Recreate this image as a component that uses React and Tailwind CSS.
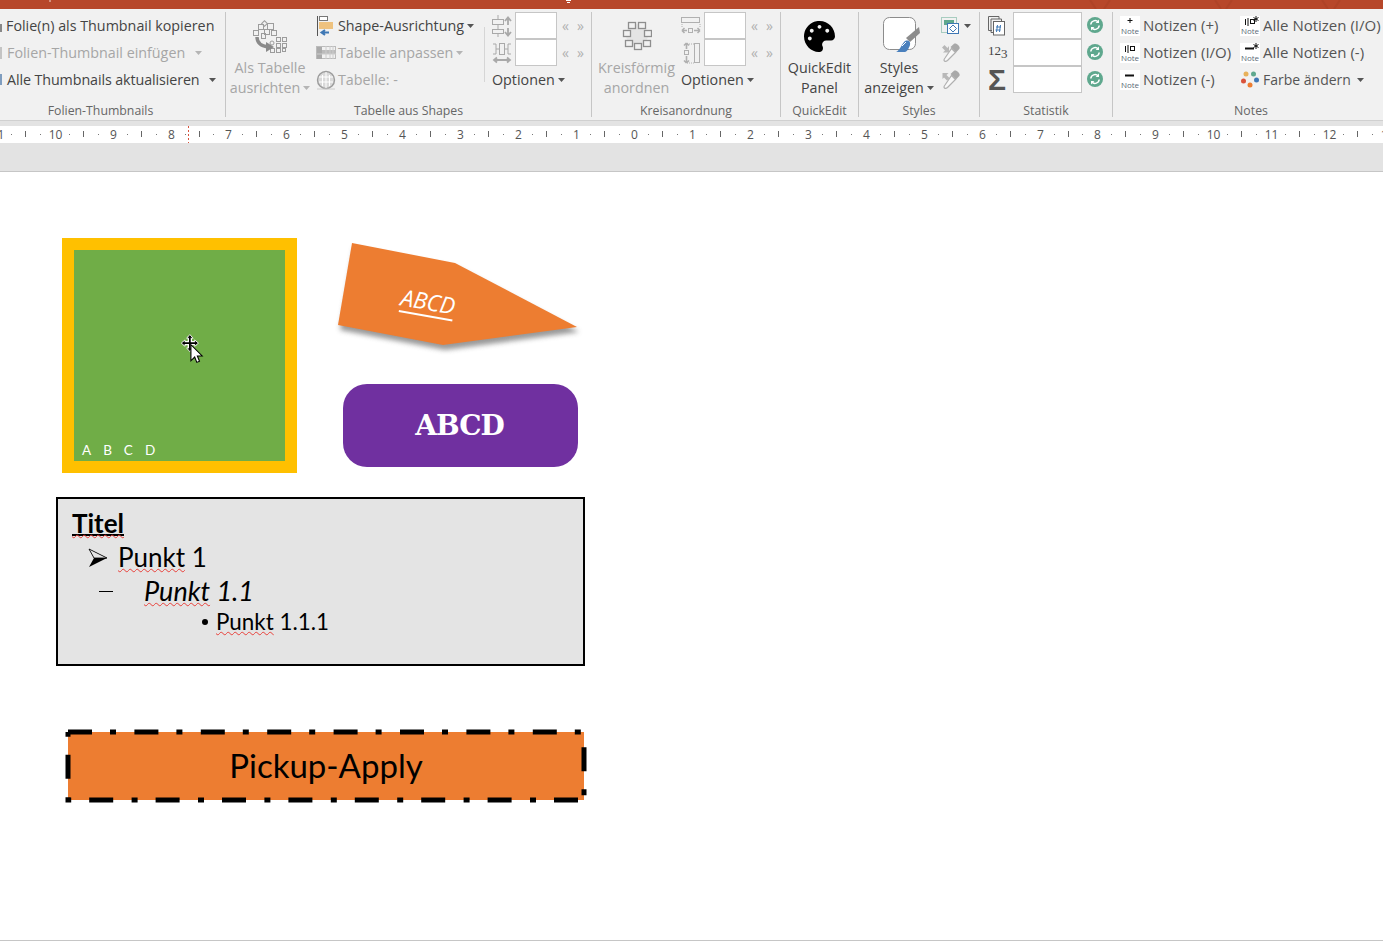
import { FaPalette } from 'react-icons/fa'

const DARK = 'text-[#444444]'
const MUTED = 'text-[#a6a6a6]'

function Caret({ muted, className = '' }) {
  return (
    <svg width="7" height="4" viewBox="0 0 7 4" className={`shrink-0 ${className}`}>
      <path d="M0 0h7L3.5 4z" fill={muted ? '#b5b5b5' : '#555'} />
    </svg>
  )
}

function Row({ children, className = '' }) {
  return <div className={`flex h-[27px] items-center whitespace-nowrap ${className}`}>{children}</div>
}

function Group({ width, label, labelClass = 'text-center', last, children }) {
  return (
    <div className={`${width} h-[105px] shrink-0 flex flex-col ${last ? '' : 'border-r border-[#c6c6c6]'}`}>
      <div className="h-[88px] flex shrink-0">{children}</div>
      <div className={`mt-[3px] h-[16px] leading-[16px] text-[12.3px] text-[#666666] ${labelClass}`}>{label}</div>
    </div>
  )
}

function BigButton({ width, icon, lines, muted, caret }) {
  return (
    <div className={`${width} shrink-0 flex flex-col items-center ${muted ? MUTED : DARK}`}>
      <div className="h-[44px] shrink-0 flex items-center justify-center mt-[2px]">{icon}</div>
      <div className="h-[20px] shrink-0 leading-[20px]">{lines[0]}</div>
      <div className="h-[20px] shrink-0 leading-[20px] flex items-center gap-[3px]">
        {lines[1]}
        {caret && <Caret muted={muted} />}
      </div>
    </div>
  )
}

function Stepper({ icon }) {
  return (
    <Row>
      <div className="w-[20px] h-[27px] flex items-center justify-center">{icon}</div>
      <div className="ml-[3px] w-[42px] h-[27px] bg-white border border-[#c6c6c6]" />
      <div className="ml-[5px] w-[22px] pt-[1px] flex justify-between text-[14px] leading-none text-[#b0b0b0]">
        <span>«</span>
        <span>»</span>
      </div>
    </Row>
  )
}

/* ---------- ribbon icons ---------- */

function AlignAsTableIcon() {
  return (
    <svg width="36" height="36" viewBox="0 0 36 36" fill="none" stroke="#9c9c9c" strokeWidth="1">
      <rect x="10.500" y="3.500" width="4" height="4" transform="rotate(45 12.500 5.500)" />
      <rect x="6.500" y="6.500" width="5" height="5" />
      <rect x="15.500" y="5.500" width="6" height="6" />
      <rect x="12.500" y="11.500" width="5" height="5" />
      <rect x="19.500" y="12.500" width="5" height="5" />
      <rect x="1.500" y="12.500" width="5" height="5" />
      <rect x="9.500" y="15.500" width="4" height="5" />
      <rect x="24.500" y="19.500" width="4" height="4" />
      <rect x="30.500" y="19.500" width="4" height="4" />
      <rect x="24.500" y="25.500" width="4" height="4" />
      <rect x="30.500" y="25.500" width="4" height="4" />
      <rect x="18.500" y="30.500" width="4" height="4" />
      <rect x="24.500" y="30.500" width="4" height="4" />
      <rect x="30.500" y="30.500" width="3" height="3" />
      <circle cx="20" cy="25" r="2" />
      <path d="M5 19c0 6 4 9 11 10" stroke="#8a8a8a" strokeWidth="3.400" />
      <path d="M14 24l8 5-8 5z" fill="#8a8a8a" stroke="none" />
    </svg>
  )
}

function ShapeAlignIcon() {
  return (
    <svg width="20" height="20" viewBox="0 0 20 20">
      <path d="M1.500 0v20" stroke="#555" />
      <rect x="3.500" y="0.500" width="8" height="4" fill="#fff" stroke="#777" />
      <rect x="3" y="6" width="14" height="7" fill="#eec27f" />
      <path d="M13 16.500H6M9 14l-3.500 2.500L9 19" stroke="#3f78b5" strokeWidth="2" fill="none" />
    </svg>
  )
}

function TableFitIcon() {
  return (
    <svg width="20" height="16" viewBox="0 0 20 16">
      <rect x="0.500" y="1.500" width="19" height="12" fill="none" stroke="#bbb" />
      <rect x="1" y="2" width="5" height="12" fill="#aaa" />
      <path d="M6 5h14v4H6z" fill="#bbb" />
      <path d="M10 1v13M14 1v13M17 1v13M1 9h19" stroke="#ccc" />
    </svg>
  )
}

function TableInfoIcon() {
  return (
    <svg width="20" height="20" viewBox="0 0 20 20" fill="none">
      <circle cx="10" cy="10" r="8.500" fill="#d9d9d9" stroke="#9c9c9c" strokeWidth="1.400" />
      <path d="M10 2v16M6.500 5v11M13.500 5v11M3 7h14M3 12h14" stroke="#fff" />
      <path d="M1 19h18" stroke="#ccc" />
    </svg>
  )
}

function StackVerticalIcon() {
  return (
    <svg width="20" height="22" viewBox="0 0 20 22" fill="none" stroke="#a9a9a9">
      <path d="M6 0v4M6 10v4M6 19v3" />
      <rect x="0.500" y="4.500" width="11" height="5" fill="#f1f1f1" />
      <rect x="0.500" y="14.500" width="11" height="4" fill="#f1f1f1" />
      <path d="M16 3v7M13 6l3-3.500L19 6M16 13v7M13 17l3 3.500 3-3.500" strokeWidth="1.800" />
    </svg>
  )
}

function StackHorizontalIcon() {
  return (
    <svg width="20" height="22" viewBox="0 0 20 22" fill="none" stroke="#a9a9a9">
      <path d="M1 2h3v10H1M4 7h3M13 7h3M16 2h3M16 12h3M16 2v10" />
      <rect x="7.500" y="1.500" width="5" height="11" fill="#f1f1f1" />
      <path d="M2 18h16M5 15.500L2 18l3 2.500M15 15.500l3 2.500-3 2.500" strokeWidth="1.800" />
    </svg>
  )
}

function CircleIcon() {
  return (
    <svg width="30" height="30" viewBox="0 0 30 30" fill="none" stroke="#8e8e8e" strokeWidth="1.300">
      <circle cx="15" cy="14" r="11" fill="#e4e4e4" stroke="none" />
      <rect x="6.500" y="1.500" width="7" height="6" fill="#f1f1f1" />
      <rect x="16.500" y="1.500" width="7" height="6" fill="#f1f1f1" />
      <rect x="1.500" y="9.500" width="7" height="6" fill="#f1f1f1" />
      <rect x="22.500" y="9.500" width="7" height="6" fill="#f1f1f1" />
      <rect x="3.500" y="19.500" width="7" height="6" fill="#f1f1f1" />
      <rect x="12.500" y="22.500" width="7" height="6" fill="#f1f1f1" />
      <rect x="21.500" y="19.500" width="7" height="6" fill="#f1f1f1" />
    </svg>
  )
}

function SpaceHorizontalIcon() {
  return (
    <svg width="20" height="22" viewBox="0 0 20 22" fill="none" stroke="#b0b0b0">
      <rect x="0.500" y="2.500" width="18" height="5" />
      <path d="M1 9v3M19 9v3" strokeDasharray="1 1" />
      <rect x="7.500" y="13.500" width="4" height="4" />
      <path d="M1 15.500h5M1 15.500l2.500-2.500M1 15.500l2.500 2.500M13 15.500h6M19 15.500l-2.500-2.500M19 15.500l-2.500 2.500" strokeWidth="1.600" />
    </svg>
  )
}

function SpaceVerticalIcon() {
  return (
    <svg width="20" height="24" viewBox="0 0 20 24" fill="none" stroke="#b0b0b0">
      <rect x="13.500" y="2.500" width="5" height="19" />
      <path d="M6 3h7M6 22h7" strokeDasharray="1 1" />
      <rect x="3.500" y="9.500" width="4" height="4" />
      <path d="M5.500 2v6M5.500 2L3 4.500M5.500 2L8 4.500M5.500 15v7M5.500 22L3 19.500M5.500 22L8 19.500" strokeWidth="1.600" />
    </svg>
  )
}

function StylesIcon() {
  return (
    <svg width="38" height="38" viewBox="0 0 38 38" className="ml-[3px]">
      <rect x="1.500" y="0.500" width="32" height="32" rx="6" fill="#fff" stroke="#8c8c8c" />
      <path d="M37 10l1 6-10 9-4-4z" fill="#8c8c8c" />
      <path d="M14 35c3-1 5-6 8-10 3-3 7-1 6 3-1 3-3 7-5 7z" fill="#4a80bd" />
      <path d="M20 29l4-4" stroke="#fff" />
    </svg>
  )
}

function PickShapeIcon() {
  return (
    <svg width="20" height="18" viewBox="0 0 20 18" fill="none">
      <rect x="0.500" y="0.500" width="15" height="15" stroke="#5fa88e" strokeDasharray="1 1" />
      <rect x="3" y="3" width="10" height="5" fill="#5fa88e" />
      <rect x="6.500" y="6.500" width="11" height="10" fill="#fff" stroke="#3f78b5" />
      <path d="M12 8l3.500 3.500L12 15l-3.500-3.500z" stroke="#3f78b5" />
    </svg>
  )
}

function DropperIcon({ up }) {
  return (
    <svg width="20" height="20" viewBox="0 0 20 20" fill="none">
      <path d="M13 .8c2.400-1.500 7 3 5.300 5.300l-3.300 3.400-5.500-5.500z" fill="#a9a9a9" />
      <path d="M10.500 5.500l4 4-8 8c-1 .8-2 1.300-3 .5s-.3-2 .5-3z" stroke="#b0b0b0" fill="#f8f8f8" strokeWidth="1.200" />
      {up ? (
        <path d="M1.500 9V3h6l-2 2 3 3-2.500 2.500-3-3z" fill="#b8b8b8" />
      ) : (
        <path d="M8 9.500H2l2-2-3-3L3.500 2l3 3 1.500-2z" fill="#b8b8b8" />
      )}
    </svg>
  )
}

function PagesIcon() {
  return (
    <svg width="18" height="20" viewBox="0 0 18 20" fill="none" stroke="#666">
      <path d="M4 14.500H0.500V0.500H11V3" />
      <path d="M6.500 16.500H3V3H13.500V5" />
      <rect x="5.500" y="5.500" width="11" height="13.500" fill="#fff" />
      <path d="M9.500 9l-1 7M12.500 9l-1 7M8 11h5M7.500 14h5" stroke="#3f78b5" />
    </svg>
  )
}

function RefreshIcon() {
  return (
    <svg width="16" height="16" viewBox="0 0 16 16" fill="none" className="shrink-0">
      <circle cx="8" cy="8" r="8" fill="#5fa88e" />
      <path d="M3.800 7.500A4.300 4.300 0 0 1 11.200 5" stroke="#fff" strokeWidth="1.500" />
      <path d="M12.200 8.500A4.300 4.300 0 0 1 4.800 11" stroke="#fff" strokeWidth="1.500" />
      <path d="M12 2.600v3.400H8.600zM4 13.400V10h3.400z" fill="#fff" />
    </svg>
  )
}

function NoteIcon({ children }) {
  return (
    <div className="w-[20px] h-[20px] shrink-0 bg-white flex flex-col items-center">
      <svg width="20" height="11" viewBox="0 0 20 11" className="shrink-0" stroke="#111" fill="none">
        {children}
      </svg>
      <span className="text-[8px] leading-[8px] text-[#5b6b78]">Note</span>
    </div>
  )
}

const notePlus = <path d="M10 2v5M7.500 4.500h5" />
const noteToggle = (
  <>
    <path d="M5.500 3v6M8 2v8" />
    <rect x="10.500" y="3.500" width="4" height="4" />
  </>
)
const noteMinus = <path d="M5 5.500h9" strokeWidth="2" />
const noteAst = <path d="M16 0v6M13.500 1.500l5 3M18.500 1.500l-5 3" />

function ColorDots() {
  return (
    <svg width="18" height="18" viewBox="0 0 18 18" className="shrink-0">
      <circle cx="5" cy="3" r="2.500" fill="#e8b15a" />
      <circle cx="12.500" cy="3" r="2.500" fill="#5fa88e" />
      <circle cx="2.500" cy="10" r="2.500" fill="#d9533c" />
      <circle cx="15.500" cy="9" r="2.500" fill="#3f78b5" />
      <circle cx="9" cy="14" r="2.500" fill="#ed7d31" />
    </svg>
  )
}

function Ruler() {
  const step = 57.93
  const marks = []
  for (let i = -11; i <= 13; i++) marks.push(i)
  return (
    <svg width="1383" height="17" className="block bg-white text-[12px] font-['Open_Sans',sans-serif]">
      {marks.map((i) => {
        const x = Math.round(634 + i * step)
        return (
          <g key={i}>
            <text x={x + 0.5} y="13" textAnchor="middle" fill="#555">
              {Math.abs(i)}
            </text>
            <rect x={x - 15} y="8" width="1" height="1" fill="#777" />
            <rect x={x + 14} y="8" width="1" height="1" fill="#777" />
            <rect x={x + 28} y="5" width="1" height="6" fill="#666" />
          </g>
        )
      })}
      <path d="M188.500 0v17" stroke="#d9533c" strokeDasharray="2 2" />
    </svg>
  )
}

function Ribbon() {
  return (
    <div className="h-[111px] bg-[#f1f1f1] pt-[3px] flex text-[14.3px] font-['Open_Sans',sans-serif]">
      {/* Folien-Thumbnails */}
      <Group width="w-[226px]" label="Folien-Thumbnails" labelClass="text-center pr-[24px]">
        <div>
          <Row className={DARK}>
            <div className="w-[2px] h-[8px] mt-[4px] bg-[#888888] mr-[4px]" />
            Folie(n) als Thumbnail kopieren
          </Row>
          <Row className={MUTED}>
            <div className="w-[2px] h-[12px] bg-[#c4c4c4] mr-[5px]" />
            Folien-Thumbnail einfügen
            <Caret muted className="ml-[10px]" />
          </Row>
          <Row className={`${DARK} tracking-[-0.1px]`}>
            <div className="w-[2px] h-[11px] bg-[#7f9dbf] mr-[5px]" />
            Alle Thumbnails aktualisieren
            <Caret className="ml-[9px]" />
          </Row>
        </div>
      </Group>

      {/* Tabelle aus Shapes */}
      <Group width="w-[366px]" label="Tabelle aus Shapes">
        <BigButton width="w-[88px]" icon={<AlignAsTableIcon />} lines={['Als Tabelle', 'ausrichten']} muted caret />
        <div className="w-[170px] shrink-0 pl-[2px]">
          <Row className={DARK}>
            <div className="w-[22px] shrink-0"><ShapeAlignIcon /></div>
            Shape-Ausrichtung
            <Caret className="ml-[3px]" />
          </Row>
          <Row className={MUTED}>
            <div className="w-[22px] shrink-0"><TableFitIcon /></div>
            Tabelle anpassen
            <Caret muted className="ml-[3px]" />
          </Row>
          <Row className={MUTED}>
            <div className="w-[22px] shrink-0"><TableInfoIcon /></div>
            Tabelle: -
          </Row>
        </div>
        <div className="w-px h-[55px] mt-[15px] bg-[#d6d6d6]" />
        <div className="pl-[7px]">
          <Stepper icon={<StackVerticalIcon />} />
          <Stepper icon={<StackHorizontalIcon />} />
          <Row className={DARK}>
            Optionen
            <Caret className="ml-[3px]" />
          </Row>
        </div>
      </Group>

      {/* Kreisanordnung */}
      <Group width="w-[189px]" label="Kreisanordnung">
        <BigButton width="w-[89px]" icon={<CircleIcon />} lines={['Kreisförmig', 'anordnen']} muted />
        <div>
          <Stepper icon={<SpaceHorizontalIcon />} />
          <Stepper icon={<SpaceVerticalIcon />} />
          <Row className={DARK}>
            Optionen
            <Caret className="ml-[3px]" />
          </Row>
        </div>
      </Group>

      {/* QuickEdit */}
      <Group width="w-[78px]" label="QuickEdit">
        <BigButton width="w-[77px]" icon={<FaPalette size={31} color="#000" />} lines={['QuickEdit', 'Panel']} />
      </Group>

      {/* Styles */}
      <Group width="w-[121px]" label="Styles">
        <BigButton width="w-[80px]" icon={<StylesIcon />} lines={['Styles', 'anzeigen']} caret />
        <div className="pl-[2px]">
          <Row className="gap-[3px]">
            <PickShapeIcon />
            <Caret />
          </Row>
          <Row><DropperIcon /></Row>
          <Row><DropperIcon up /></Row>
        </div>
      </Group>

      {/* Statistik */}
      <Group width="w-[133px]" label="Statistik">
        <div className="w-[33px] shrink-0 pl-[8px]">
          <Row><PagesIcon /></Row>
          <Row className="font-['Liberation_Serif',serif] text-[13px] text-[#444444] pb-[3px]">
            12<span className="translate-y-[3px]">3</span>
          </Row>
          <Row className="text-[30px] font-bold text-[#555555] font-['Liberation_Sans',sans-serif]">Σ</Row>
        </div>
        <div>
          {[0, 1, 2].map((i) => (
            <Row key={i}>
              <div className="w-[69px] h-[27px] bg-white border border-[#c6c6c6]" />
              <div className="ml-[5px] mb-[1px]"><RefreshIcon /></div>
            </Row>
          ))}
        </div>
      </Group>

      {/* Notes */}
      <Group width="flex-1" label="Notes" last labelClass="text-center pl-[6px]">
        <div className="w-[127px] shrink-0 pl-[7px] text-[15px] text-[#555555]">
          <Row className="gap-[3px]"><NoteIcon>{notePlus}</NoteIcon>Notizen (+)</Row>
          <Row className="gap-[3px]"><NoteIcon>{noteToggle}</NoteIcon>Notizen (I/O)</Row>
          <Row className="gap-[3px]"><NoteIcon>{noteMinus}</NoteIcon>Notizen (-)</Row>
        </div>
        <div className="text-[15px] text-[#555555]">
          <Row className="gap-[3px]"><NoteIcon>{noteToggle}{noteAst}</NoteIcon>Alle Notizen (I/O)</Row>
          <Row className="gap-[3px]"><NoteIcon>{noteMinus}{noteAst}</NoteIcon>Alle Notizen (-)</Row>
          <Row className="gap-[3px] text-[14px]">
            <div className="w-[20px] flex justify-center"><ColorDots /></div>
            Farbe ändern
            <Caret className="ml-[3px]" />
          </Row>
        </div>
      </Group>
    </div>
  )
}

const squiggle =
  "underline decoration-wavy decoration-[#e8403a] decoration-1 underline-offset-[1px] [text-decoration-skip-ink:none]"

function Slide() {
  return (
    <div className="relative flex-1 bg-white border-b border-[#c6c6c6] font-['Lato',sans-serif] text-black">
      {/* green square */}
      <div className="absolute left-[62px] top-[66px] w-[235px] h-[235px] bg-[#70ad47] border-[12px] border-[#ffc000] flex items-end pl-[8px] pb-[3px]">
        <span className="text-[13.5px] leading-[16px] tracking-[12px] text-white">ABCD</span>
      </div>

      {/* move cursor */}
      <svg width="24" height="30" viewBox="0 0 22 28" className="absolute left-[180px] top-[162px]">
        <path d="M9 2v13M2.500 8.500h13" stroke="#fff" strokeWidth="4" />
        <path d="M9 .5l3 3.500H6zM9 16.500l3-3.500H6zM1 8.500L4.500 5.500v6zM17 8.500l-3.500-3v6z" fill="#000" stroke="#fff" strokeWidth="0.800" />
        <path d="M9 3v11M3 8.500h12" stroke="#000" strokeWidth="1.600" />
        <path d="M10 10v15l3.500-3.500 2 5 2.500-1-2-5h4.500z" fill="#fff" stroke="#000" />
      </svg>

      {/* cut polygon */}
      <svg width="260" height="120" viewBox="0 0 260 120" className="absolute left-[330px] top-[64px]">
        <defs>
          <filter id="polyShadow" x="-10%" y="-10%" width="120%" height="130%">
            <feGaussianBlur stdDeviation="2.500" />
          </filter>
        </defs>
        <path d="M22 7L125 27 247 91 113 109 8 89z" fill="#777" opacity="0.75" filter="url(#polyShadow)" transform="translate(2 5)" />
        <path d="M22 7L125 27 247 91 113 109 8 89z" fill="#ed7d31" />
      </svg>
      <span className="absolute left-[401px] top-[114px] rotate-[10deg] italic text-[23px] leading-[30px] text-white underline decoration-2 underline-offset-[5px] font-['Open_Sans',sans-serif] tracking-[-0.3px]">
        ABCD
      </span>

      {/* purple rounded */}
      <div className="absolute left-[343px] top-[212px] w-[235px] h-[83px] rounded-[24px] bg-[#7030a0] flex items-center justify-center pr-[2px] text-white font-bold text-[28px] font-['DejaVu_Serif',serif] tracking-[-1px]">
        ABCD
      </div>

      {/* text box */}
      <div className="absolute left-[56px] top-[325px] w-[529px] h-[169px] bg-[#e4e4e4] border-2 border-black pl-[14px] pt-[8px]">
        <div className="h-[31px] text-[26px] font-bold">
          <span className={`block w-fit h-[29px] leading-[32px] border-b-2 border-black ${squiggle}`}>Titel</span>
        </div>
        <div className="h-[35px] flex items-center text-[26px] pt-[4px]">
          <svg width="20" height="20" viewBox="0 0 20 20" className="ml-[16px]">
            <path d="M1 1l18 9L1 19l5-9z" fill="#000" />
            <path d="M1 1l18 9H6z" fill="#e4e4e4" stroke="#000" strokeWidth="0.800" />
          </svg>
          <span className="ml-[10px]"><span className={squiggle}>Punkt</span> 1</span>
        </div>
        <div className="h-[33px] flex items-center italic text-[27px] pt-[4px]">
          <div className="ml-[27px] w-[14px] h-px bg-black" />
          <span className="ml-[31px]"><span className={squiggle}>Punkt</span> 1.1</span>
        </div>
        <div className="h-[30px] flex items-center text-[22.4px] pt-[2px]">
          <div className="ml-[130px] w-[6px] h-[6px] rounded-full bg-black" />
          <span className="ml-[8px]"><span className={squiggle}>Punkt</span> 1.1.1</span>
        </div>
      </div>

      {/* Pickup-Apply */}
      <div className="absolute left-[68px] top-[560px] w-[516px] h-[68px] bg-[#ed7d31] flex items-center justify-center text-[33px]">
        Pickup-Apply
        <svg width="526" height="78" viewBox="0 0 526 78" className="absolute -left-[5px] -top-[5px]" fill="none" stroke="#000" strokeWidth="5">
          <path d="M5 5H521V73" strokeDasharray="24 18 6 18.400" />
          <path d="M521 73H5V5" strokeDasharray="24 18 6 18.400" strokeDashoffset="-6" />
        </svg>
      </div>
    </div>
  )
}

export default function App() {
  return (
    <div className="w-[1383px] h-[941px] overflow-hidden flex flex-col bg-white">
      {/* title bar */}
      <div className="h-[9px] bg-[#b7472a] flex shrink-0 overflow-hidden">
        <svg width="1383" height="9" fill="none">
          <path d="M50 0v2" stroke="#f3d9d0" />
          <path d="M566 0.500h5M567 2.500h3" stroke="#fff" />
          <path d="M1090 0l6 9M1110 0l-6 9M1215 0l6 9M1232 0l-6 9M1322 0l6 9M1340 0l-6 9" stroke="#af4327" strokeWidth="2" />
        </svg>
      </div>
      <Ribbon />
      <div className="h-[6px] bg-[#e3e3e3] border-t border-[#d0d0d0] shrink-0" />
      <Ruler />
      <div className="h-[29px] bg-[#e3e3e3] border-b border-[#c6c6c6] shrink-0" />
      <Slide />
    </div>
  )
}
